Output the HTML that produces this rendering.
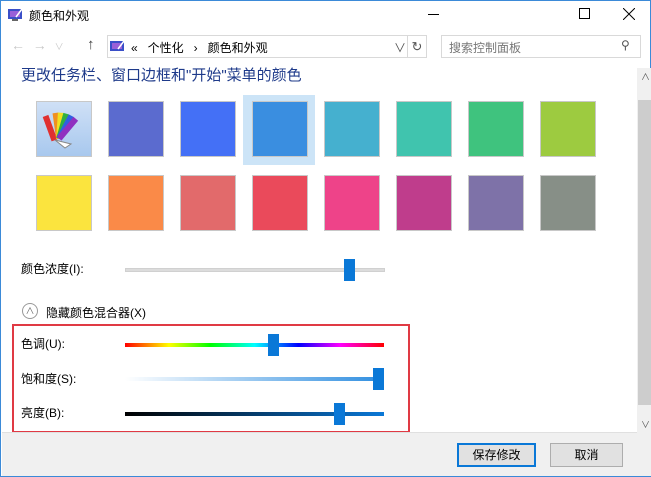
<!DOCTYPE html><html><head><meta charset="utf-8"><style>
*{margin:0;padding:0;box-sizing:border-box}
body{width:651px;height:477px;overflow:hidden;background:#fff;font-family:"Liberation Sans","Noto Sans CJK SC",sans-serif;font-size:12px;color:#000;position:relative;border:1px solid #3b8ad8;border-top:none}
.a{position:absolute}
.t{width:56px;height:56px;border:1px solid #c8c8c8}
.trk{height:4px}
.th{width:11px;height:22px;background:#0a78d7}
</style></head><body>
<div class="a" style="left:0;top:0;width:651px;height:1px;background:#3b8ad8"></div>
<svg class="a" style="left:7px;top:8px" width="16" height="14"><rect x="0" y="1" width="14" height="10" fill="#3a4fc8"/><rect x="2" y="3" width="10" height="6" fill="#9a60d8"/><path d="M8 9L14 1" stroke="#fff" stroke-width="1.5"/><rect x="4" y="11" width="6" height="2" fill="#666"/></svg>
<div class="a" style="left:28px;top:7px;font-size:12px">颜色和外观</div>
<div class="a" style="left:427px;top:14px;width:11px;height:1px;background:#000"></div>
<div class="a" style="left:578px;top:8px;width:11px;height:11px;border:1px solid #000"></div>
<svg class="a" style="left:622px;top:8px" width="12" height="12"><path d="M0 0L12 12M12 0L0 12" stroke="#000"/></svg>
<div class="a" style="left:10px;top:37px;color:#c8c8c8;font-size:14px">←&nbsp;&nbsp;→&nbsp;&nbsp;<span style="font-size:9px">∨</span></div>
<div class="a" style="left:86px;top:36px;color:#444;font-size:15px">↑</div>
<div class="a" style="left:106px;top:35px;width:320px;height:23px;border:1px solid #d9d9d9"></div>
<div class="a" style="left:406px;top:35px;width:20px;height:23px;border:1px solid #d9d9d9;color:#555;text-align:center;line-height:21px;font-size:13px">↻</div>
<svg class="a" style="left:109px;top:40px" width="16" height="14"><rect x="0" y="1" width="14" height="10" fill="#3a4fc8"/><rect x="2" y="3" width="10" height="6" fill="#9a60d8"/><path d="M8 9L14 1" stroke="#fff" stroke-width="1.5"/></svg>
<div class="a" style="left:130px;top:39px">«&nbsp;&nbsp; 个性化 &nbsp; › &nbsp; 颜色和外观</div>
<div class="a" style="left:393px;top:39px;color:#555">∨</div>
<div class="a" style="left:440px;top:35px;width:200px;height:23px;border:1px solid #d9d9d9"></div>
<div class="a" style="left:448px;top:39px;color:#777">搜索控制面板</div>
<div class="a" style="left:620px;top:38px;color:#555">⚲</div>
<div class="a" style="left:20px;top:64px;font-size:15px;color:#1e3a8a">更改任务栏、窗口边框和"开始"菜单的颜色</div>
<div class="a" style="left:636px;top:68px;width:15px;height:364px;background:#f0f0f0"></div>
<div class="a" style="left:637px;top:100px;width:13px;height:305px;background:#cdcdcd"></div>
<div class="a" style="left:640px;top:70px;font-size:9px;color:#555">∧</div>
<div class="a" style="left:640px;top:418px;font-size:9px;color:#555">∨</div>
<div class="a" style="left:242px;top:95px;width:72px;height:70px;background:#cce4f7"></div>
<div class="a t" style="left:35px;top:101px;background:linear-gradient(#cfe0f6,#a8c8ee)"></div>
<svg class="a" style="left:40px;top:108px" width="44" height="44"><g transform="rotate(-20 20 30)"><rect x="10" y="4" width="6" height="26" fill="#e03030"/><rect x="15" y="4" width="6" height="26" fill="#f09020" transform="rotate(12 18 30)"/><rect x="15" y="4" width="6" height="26" fill="#f0e020" transform="rotate(24 18 30)"/><rect x="15" y="4" width="6" height="26" fill="#30b040" transform="rotate(36 18 30)"/><rect x="15" y="4" width="6" height="26" fill="#3060e0" transform="rotate(48 18 30)"/><rect x="15" y="4" width="6" height="26" fill="#9030c0" transform="rotate(60 18 30)"/></g><path d="M14 32l10 8 6-4z" fill="#fff" stroke="#888"/></svg>
<div class="a t" style="left:107px;top:101px;background:#5b6bcf"></div>
<div class="a t" style="left:179px;top:101px;background:#4470f6"></div>
<div class="a t" style="left:251px;top:101px;background:#3a8ee0"></div>
<div class="a t" style="left:323px;top:101px;background:#45b0cf"></div>
<div class="a t" style="left:395px;top:101px;background:#40c4ae"></div>
<div class="a t" style="left:467px;top:101px;background:#3fc37e"></div>
<div class="a t" style="left:539px;top:101px;background:#9dcb40"></div>
<div class="a t" style="left:35px;top:175px;background:#fbe43e"></div>
<div class="a t" style="left:107px;top:175px;background:#fa8a48"></div>
<div class="a t" style="left:179px;top:175px;background:#e26a6b"></div>
<div class="a t" style="left:251px;top:175px;background:#ea4a5b"></div>
<div class="a t" style="left:323px;top:175px;background:#ee4389"></div>
<div class="a t" style="left:395px;top:175px;background:#bf3d8c"></div>
<div class="a t" style="left:467px;top:175px;background:#7e72a8"></div>
<div class="a t" style="left:539px;top:175px;background:#878f87"></div>
<div class="a" style="left:20px;top:260px">颜色浓度(I):</div>
<div class="a trk" style="left:124px;top:268px;width:260px;background:#dcdcdc;border:1px solid #d0d0d0"></div>
<div class="a th" style="left:343px;top:259px"></div>
<div class="a" style="left:21px;top:303px;width:16px;height:16px;border:1px solid #999;border-radius:50%;text-align:center;font-size:9px;line-height:14px;color:#666">∧</div>
<div class="a" style="left:45px;top:304px">隐藏颜色混合器(X)</div>
<div class="a" style="left:11px;top:324px;width:398px;height:109px;border:2px solid #e03a44"></div>
<div class="a" style="left:20px;top:335px">色调(U):</div>
<div class="a trk" style="left:124px;top:343px;width:259px;background:linear-gradient(90deg,#f00,#ff0 17%,#0f0 33%,#0ff 50%,#00f 67%,#f0f 83%,#f00)"></div>
<div class="a th" style="left:267px;top:334px"></div>
<div class="a" style="left:20px;top:370px">饱和度(S):</div>
<div class="a trk" style="left:124px;top:377px;width:259px;background:linear-gradient(90deg,#fff,#2f8ee0)"></div>
<div class="a th" style="left:372px;top:368px"></div>
<div class="a" style="left:20px;top:404px">亮度(B):</div>
<div class="a trk" style="left:124px;top:412px;width:259px;background:linear-gradient(90deg,#000,#0a78d7)"></div>
<div class="a th" style="left:333px;top:403px"></div>
<div class="a" style="left:1px;top:432px;width:635px;height:44px;background:#f0f0f0;border-top:1px solid #e0e0e0"></div>
<div class="a" style="left:636px;top:432px;width:14px;height:44px;background:#f0f0f0"></div>
<div class="a" style="left:456px;top:443px;width:79px;height:24px;border:2px solid #0a78d7;background:#e1e1e1;text-align:center;line-height:20px">保存修改</div>
<div class="a" style="left:549px;top:443px;width:73px;height:24px;border:1px solid #adadad;background:#e1e1e1;text-align:center;line-height:22px">取消</div>
</body></html>
